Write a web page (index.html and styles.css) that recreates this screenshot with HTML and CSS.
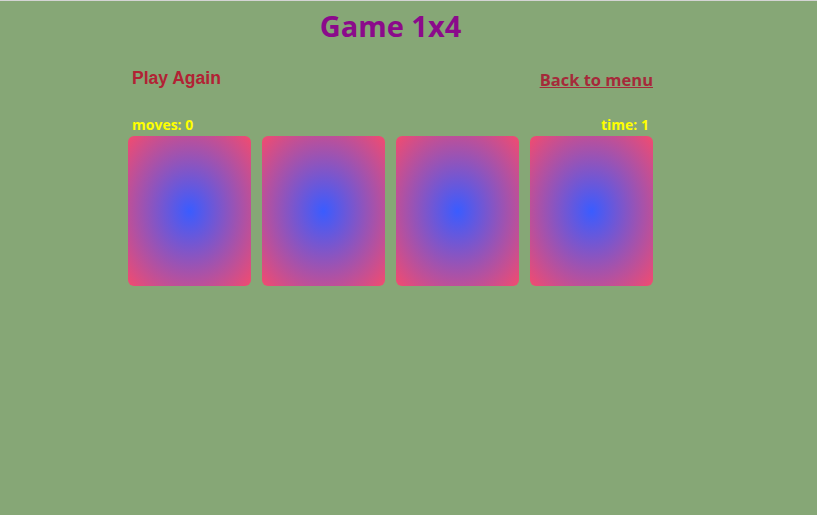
FILE: index.html
```html
<!DOCTYPE html>
<html>
<head>
  <meta charset="UTF-8">
  <title>Game 1x4</title>
  <link rel="stylesheet" href="styles.css">
</head>
<body>
  <div class="game">
    <h1 class="title">Game 1x4</h1>
    <div class="controls">
      <button class="play-again">Play Again</button>
      <a class="back" href="#">Back to menu</a>
    </div>
    <div class="stats">
      <span>moves: 0</span>
      <span>time: 1</span>
    </div>
    <div class="board">
      <div class="card"></div>
      <div class="card"></div>
      <div class="card"></div>
      <div class="card"></div>
    </div>
  </div>
</body>
</html>
```

FILE: styles.css
```css
body {
  margin: 0;
  background-color: #86a776;
  border-top: 1px solid #d4d4d4;
  height: 514px;
  font-family: "Open Sans", sans-serif;
}

.game {
  width: 525px;
  margin-left: 128px;
}

.title {
  margin: 0;
  padding-top: 6px;
  text-align: center;
  font-size: 29px;
  line-height: 38px;
  color: #8b0a8b;
}

.controls {
  display: flex;
  justify-content: space-between;
  align-items: flex-start;
  margin-top: 23px;
  padding: 0 0 0 4px;
}

.play-again {
  background: none;
  border: none;
  padding: 0;
  font-family: "Liberation Sans", Arial, sans-serif;
  font-size: 17.5px;
  font-weight: bold;
  line-height: 20px;
  color: #b22234;
  cursor: pointer;
}

.back {
  font-size: 16.5px;
  font-weight: bold;
  line-height: 24px;
  color: #a52a3a;
}

.stats {
  display: flex;
  justify-content: space-between;
  padding: 0 4px 1px;
  margin-top: 23px;
  font-size: 14px;
  font-weight: bold;
  line-height: 20px;
  color: #ffff00;
}

.board {
  display: flex;
  gap: 11px;
}

.card {
  width: 123px;
  height: 150px;
  border-radius: 6px;
  background: radial-gradient(ellipse farthest-corner, #3a5cff 0%, #f24b6f 100%);
}
```
